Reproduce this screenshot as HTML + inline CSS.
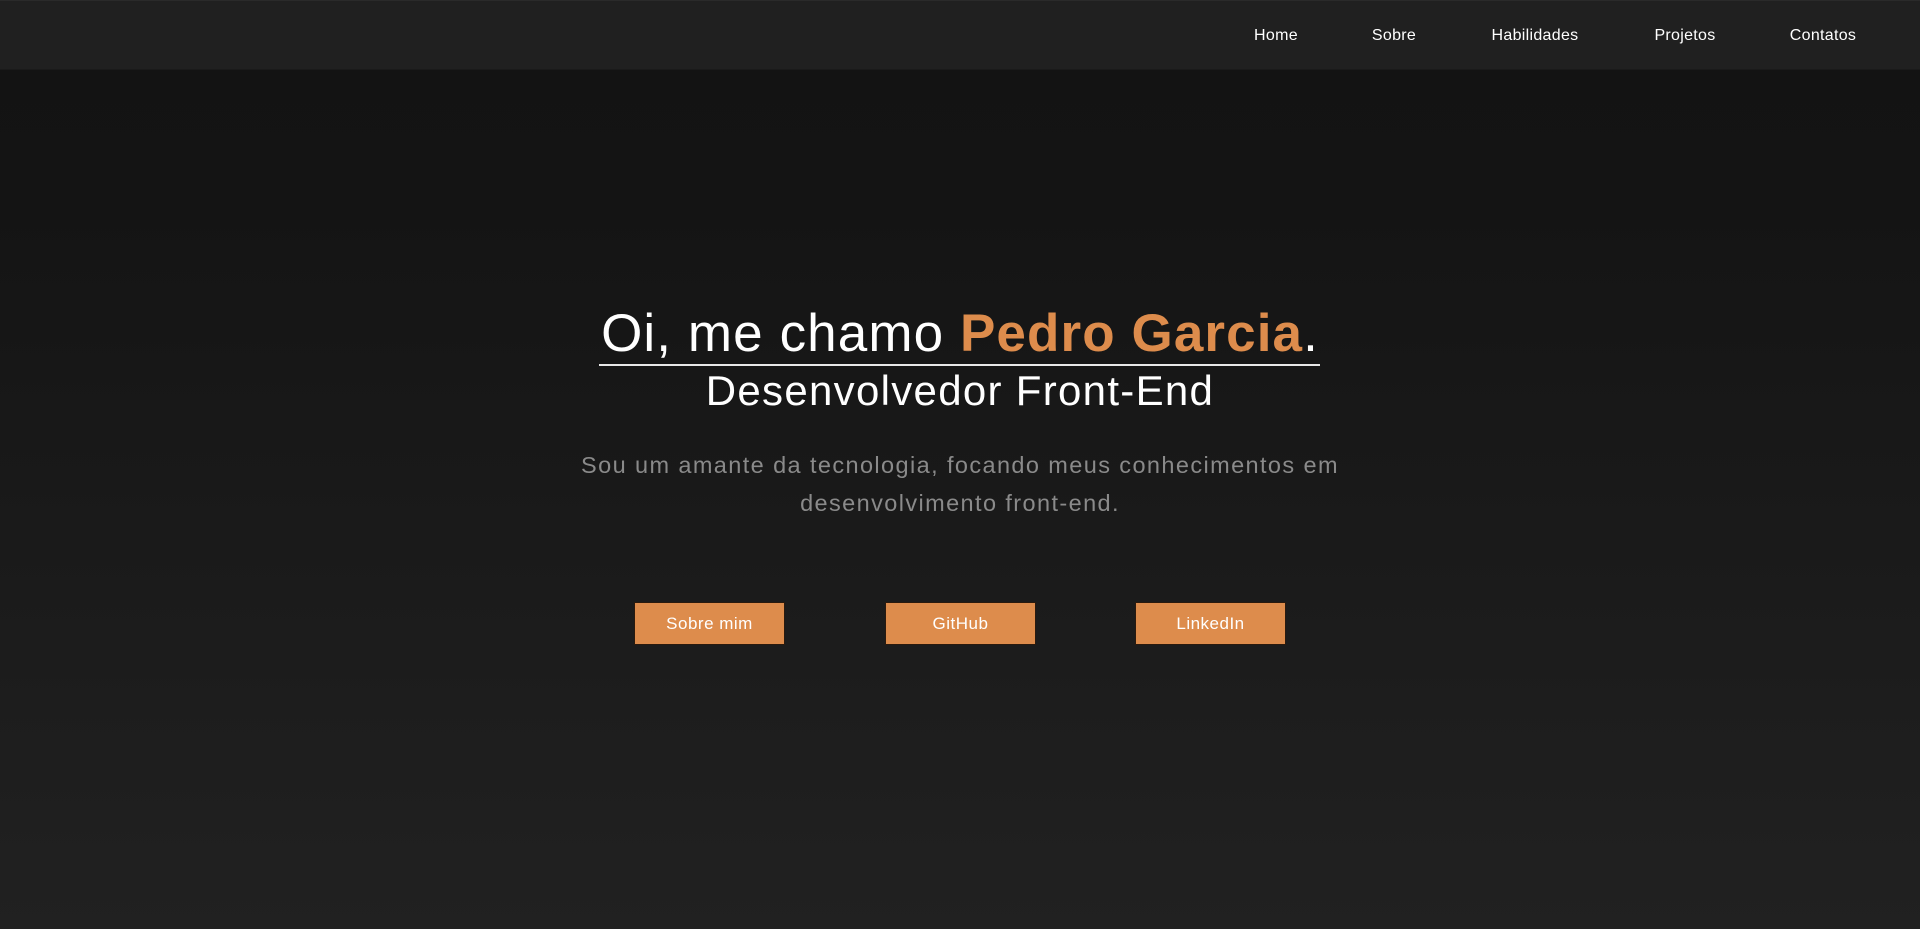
<!DOCTYPE html>
<html><head><meta charset="utf-8"><style>
*{margin:0;padding:0;box-sizing:border-box}
html,body{width:1920px;height:929px;overflow:hidden}
body{font-family:"Liberation Sans","DejaVu Sans",sans-serif;background:linear-gradient(#131313 70px,#141414 200px,#212121 929px);color:#fff;position:relative}
nav{position:absolute;top:0;left:0;width:1920px;height:70px;background:#202020;border-top:1px solid #2a2a2a;border-bottom:1px solid #1a1a1a}
nav a{position:absolute;top:26px;font-size:16px;color:#fff;text-decoration:none;transform:translateX(-50%);white-space:nowrap;letter-spacing:0.3px}
.c{position:absolute;left:0;width:1920px;text-align:center;white-space:nowrap}
h1{top:303px;font-size:53px;font-weight:normal;letter-spacing:1.1px}
h1 b{color:#dd8c4c}
.line{position:absolute;left:599px;top:364px;width:721px;height:2px;background:#e8e8e8}
h2{top:367px;font-size:42px;font-weight:normal;letter-spacing:1.3px}
p{top:446px;font-size:23.5px;line-height:38px;color:#8a8a8a;letter-spacing:1.4px}
.btn{position:absolute;top:602px;width:151px;height:43px;background:#dd8c4c;border:1px solid #2a1a0e;color:#fff;font-size:17px;text-align:center;line-height:41px;letter-spacing:0.5px}
</style></head><body>
<nav>
<a style="left:1276px">Home</a>
<a style="left:1394px">Sobre</a>
<a style="left:1535px">Habilidades</a>
<a style="left:1685px">Projetos</a>
<a style="left:1823px">Contatos</a>
</nav>
<h1 class="c">Oi, me chamo <b>Pedro Garcia</b>.</h1>
<div class="line"></div>
<h2 class="c">Desenvolvedor Front-End</h2>
<p class="c">Sou um amante da tecnologia, focando meus conhecimentos em<br>desenvolvimento front-end.</p>
<div class="btn" style="left:634px">Sobre mim</div>
<div class="btn" style="left:885px">GitHub</div>
<div class="btn" style="left:1135px">LinkedIn</div>
</body></html>
